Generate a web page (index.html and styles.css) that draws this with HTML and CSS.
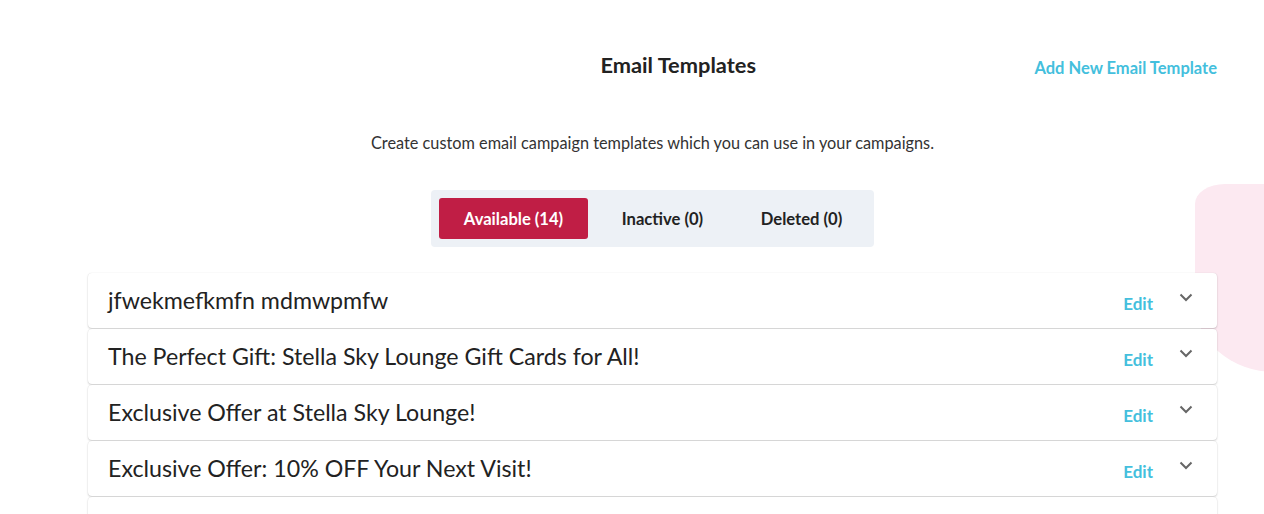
FILE: index.html
```html
<!DOCTYPE html>
<html>
<head>
<meta charset="utf-8">
<link rel="stylesheet" href="styles.css">
</head>
<body>
<div class="blob"></div>
<div class="page">
  <div class="header">
    <h1 class="title">Email Templates</h1>
    <a class="add-link">Add New Email Template</a>
  </div>
  <p class="desc">Create custom email campaign templates which you can use in your campaigns.</p>
  <div class="tabs-wrap">
    <div class="tabs">
      <div class="tab active">Available (14)</div>
      <div class="tab">Inactive (0)</div>
      <div class="tab">Deleted (0)</div>
    </div>
  </div>
  <div class="list">
    <div class="card"><div class="name">jfwekmefkmfn mdmwpmfw</div><div class="actions"><span class="edit">Edit</span><svg class="chev" width="14" height="9" viewBox="0 0 14 9"><path d="M1.5 1.5 L7 7 L12.5 1.5" fill="none" stroke="#666" stroke-width="2"/></svg></div></div>
    <div class="card"><div class="name">The Perfect Gift: Stella Sky Lounge Gift Cards for All!</div><div class="actions"><span class="edit">Edit</span><svg class="chev" width="14" height="9" viewBox="0 0 14 9"><path d="M1.5 1.5 L7 7 L12.5 1.5" fill="none" stroke="#666" stroke-width="2"/></svg></div></div>
    <div class="card"><div class="name">Exclusive Offer at Stella Sky Lounge!</div><div class="actions"><span class="edit">Edit</span><svg class="chev" width="14" height="9" viewBox="0 0 14 9"><path d="M1.5 1.5 L7 7 L12.5 1.5" fill="none" stroke="#666" stroke-width="2"/></svg></div></div>
    <div class="card"><div class="name">Exclusive Offer: 10% OFF Your Next Visit!</div><div class="actions"><span class="edit">Edit</span><svg class="chev" width="14" height="9" viewBox="0 0 14 9"><path d="M1.5 1.5 L7 7 L12.5 1.5" fill="none" stroke="#666" stroke-width="2"/></svg></div></div>
    <div class="card card-empty"></div>
  </div>
</div>
</body>
</html>
```

FILE: styles.css
```css
html, body {
  margin: 0;
  padding: 0;
  background: #fff;
  overflow: hidden;
  height: 514px;
}
body {
  font-family: Lato, "Liberation Sans", sans-serif;
  color: #222;
  position: relative;
}
.blob {
  position: absolute;
  left: 1195px;
  top: 184px;
  width: 140px;
  height: 188px;
  background: #fce9f1;
  border-radius: 30px 60px 60px 80px / 20px 60px 60px 70px;
  z-index: 0;
}
.page {
  position: relative;
  z-index: 1;
  margin: 0 47px 0 88px;
  padding-top: 51px;
}
.header {
  display: flex;
  align-items: center;
}
.title {
  flex: 1;
  margin: 0 0 0 234px;
  text-align: center;
  font-size: 21.8px;
  font-weight: 700;
  color: #222;
  line-height: 28px;
}
.add-link {
  font-size: 16.5px;
  font-weight: 700;
  color: #44bfdd;
  padding-top: 6px;
}
.desc {
  margin: 54px 0 0;
  text-align: center;
  font-size: 16.3px;
  color: #333;
  line-height: 20px;
}
.tabs-wrap {
  display: flex;
  justify-content: center;
  margin-top: 37px;
}
.tabs {
  display: flex;
  background: #edf1f6;
  border-radius: 4px;
  padding: 8px;
  width: 427px;
}
.tab {
  height: 41px;
  display: flex;
  align-items: center;
  justify-content: center;
  font-size: 16.6px;
  font-weight: 700;
  color: #222;
  width: 149px;
}
.tab:nth-child(2) { width: 149px; }
.tab:nth-child(3) { width: 129px; }
.tab.active {
  background: #c01e45;
  color: #fff;
  border-radius: 3px;
}
.list {
  margin-top: 26px;
  display: flex;
  flex-direction: column;
  gap: 1px;
}
.card {
  background: #fff;
  height: 55px;
  border-radius: 4px;
  box-shadow: 0 1px 2px rgba(0,0,0,0.18), 0 0 1px rgba(0,0,0,0.12);
  display: flex;
  align-items: center;
  justify-content: space-between;
  padding: 0 24px 0 20px;
  flex-shrink: 0;
}
.name {
  font-size: 23.2px;
  color: #222;
  margin-top: -2px;
}
.actions {
  display: flex;
  align-items: center;
  gap: 26px;
}
.edit {
  font-size: 17px;
  font-weight: 700;
  color: #44bfdd;
  margin-top: 5px;
}
.chev {
  margin-top: -6px;
}
```
